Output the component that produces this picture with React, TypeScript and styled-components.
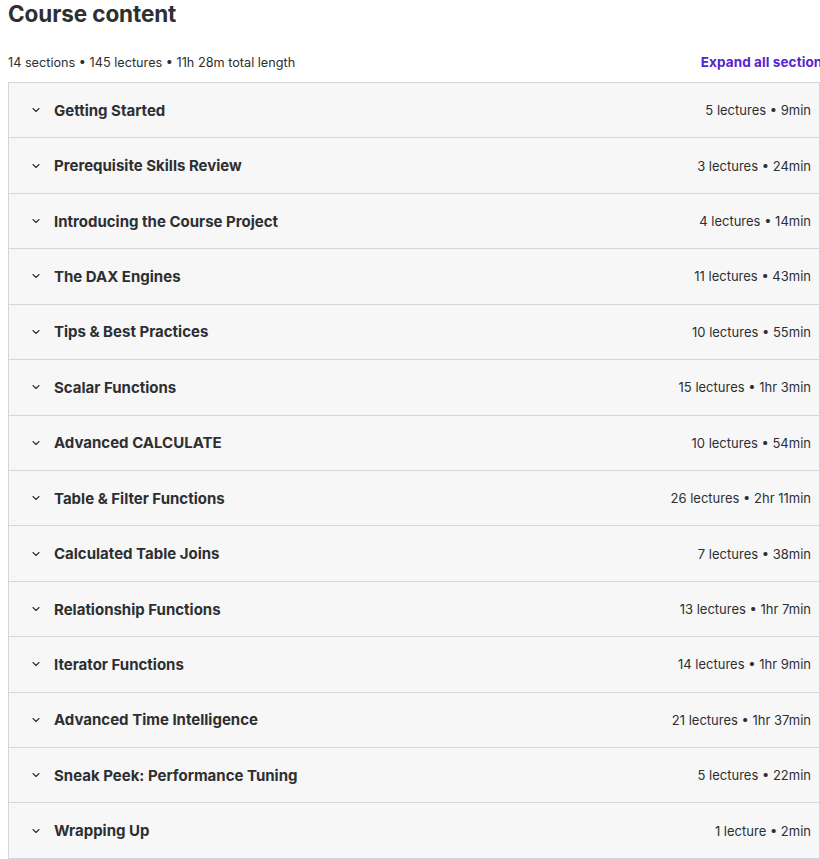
import React from 'react'
import styled, { createGlobalStyle } from 'styled-components'

const GlobalStyle = createGlobalStyle`
  html, body {
    margin: 0;
    padding: 0;
    background: #ffffff;
    overflow: hidden;
  }
  body {
    font-family: 'Inter', 'Liberation Sans', sans-serif;
    color: #2d2f31;
  }
`

interface Section {
  title: string
  lectures: number
  length: string
}

const sections: Section[] = [
  { title: 'Getting Started', lectures: 5, length: '9min' },
  { title: 'Prerequisite Skills Review', lectures: 3, length: '24min' },
  { title: 'Introducing the Course Project', lectures: 4, length: '14min' },
  { title: 'The DAX Engines', lectures: 11, length: '43min' },
  { title: 'Tips & Best Practices', lectures: 10, length: '55min' },
  { title: 'Scalar Functions', lectures: 15, length: '1hr 3min' },
  { title: 'Advanced CALCULATE', lectures: 10, length: '54min' },
  { title: 'Table & Filter Functions', lectures: 26, length: '2hr 11min' },
  { title: 'Calculated Table Joins', lectures: 7, length: '38min' },
  { title: 'Relationship Functions', lectures: 13, length: '1hr 7min' },
  { title: 'Iterator Functions', lectures: 14, length: '1hr 9min' },
  { title: 'Advanced Time Intelligence', lectures: 21, length: '1hr 37min' },
  { title: 'Sneak Peek: Performance Tuning', lectures: 5, length: '22min' },
  { title: 'Wrapping Up', lectures: 1, length: '2min' },
]

const Page = styled.div`
  padding: 0 0 0 8px;
  width: 812px;
`

const Title = styled.h2`
  margin: 0;
  padding-top: 1px;
  font-size: 22.5px;
  line-height: 26px;
  font-weight: 700;
  letter-spacing: -0.1px;
`

const Meta = styled.div`
  display: flex;
  justify-content: space-between;
  align-items: center;
  width: 822px;
  margin-top: 21px;
  margin-bottom: 6px;
  height: 28px;
  font-size: 12.7px;
`

const Stats = styled.span`
  color: #2d2f31;
`

const ExpandLink = styled.button`
  border: none;
  background: none;
  padding: 0;
  font-family: inherit;
  font-size: 13.5px;
  font-weight: 700;
  letter-spacing: 0.1px;
  color: #5624d0;
  cursor: pointer;
  white-space: nowrap;
`

const Panel = styled.div`
  border: 1px solid #d1d7dc;
  border-bottom: none;
`

const Row = styled.div`
  box-sizing: border-box;
  height: 55.43px;
  display: flex;
  align-items: center;
  justify-content: space-between;
  padding: 0 8px 0 21px;
  background: #f7f7f8;
  border-bottom: 1px solid #d1d7dc;
`

const Left = styled.div`
  display: flex;
  align-items: center;
  gap: 12px;
`

const Chevron = styled.svg`
  width: 12px;
  height: 12px;
  color: #2d2f31;
`

const SectionTitle = styled.span`
  font-size: 15px;
  font-weight: 700;
  color: #2d2f31;
`

const Content = styled.span`
  font-size: 13px;
  color: #2d2f31;
`

const App = () => (
  <Page>
    <GlobalStyle />
    <Title>Course content</Title>
    <Meta>
      <Stats>14 sections • 145 lectures • 11h 28m total length</Stats>
      <ExpandLink>Expand all sections</ExpandLink>
    </Meta>
    <Panel>
      {sections.map((s) => (
        <Row key={s.title}>
          <Left>
            <Chevron viewBox="0 0 24 24" fill="none" stroke="currentColor" strokeWidth={2.2} strokeLinecap="round" strokeLinejoin="round">
              <path d="M6 9l6 6 6-6" />
            </Chevron>
            <SectionTitle>{s.title}</SectionTitle>
          </Left>
          <Content>
            {s.lectures} {s.lectures === 1 ? 'lecture' : 'lectures'} • {s.length}
          </Content>
        </Row>
      ))}
    </Panel>
  </Page>
)

export default App
